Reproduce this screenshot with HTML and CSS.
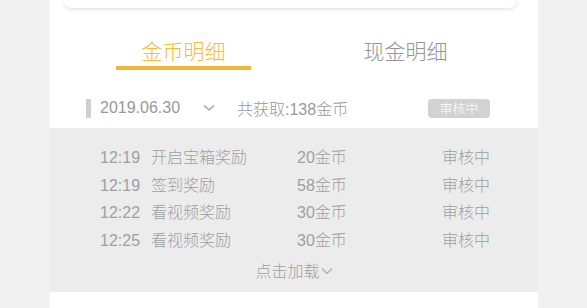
FILE: index.html
```html
<!DOCTYPE html>
<html>

<head>
    <meta charset="UTF-8">
    <title>金币明细</title>
    <link rel="stylesheet" href="styles.css">
</head>

<body>

    <div class="page">
        <div class="card"></div>

        <div class="tabs">
            <div class="tab active">金币明细</div>
            <div class="tab">现金明细</div>
        </div>

        <div class="day">
            <span class="mark"></span>
            <span class="date">2019.06.30</span>
            <svg class="arrow" width="12" height="8" viewBox="0 0 12 8">
                <path d="M1 1.5 L6 6 L11 1.5" fill="none" stroke="#999" stroke-width="1.2"/>
            </svg>
            <span class="total">共获取:138金币</span>
            <span class="badge">审核中</span>
        </div>

        <div class="list">
            <div class="row">
                <span class="time">12:19</span>
                <span class="name">开启宝箱奖励</span>
                <span class="coin">20金币</span>
                <span class="state">审核中</span>
            </div>
            <div class="row">
                <span class="time">12:19</span>
                <span class="name">签到奖励</span>
                <span class="coin">58金币</span>
                <span class="state">审核中</span>
            </div>
            <div class="row">
                <span class="time">12:22</span>
                <span class="name">看视频奖励</span>
                <span class="coin">30金币</span>
                <span class="state">审核中</span>
            </div>
            <div class="row">
                <span class="time">12:25</span>
                <span class="name">看视频奖励</span>
                <span class="coin">30金币</span>
                <span class="state">审核中</span>
            </div>
            <div class="more">点击加载<svg width="12" height="8" viewBox="0 0 12 8"><path d="M1 1.5 L6 6.5 L11 1.5" fill="none" stroke="#aaa" stroke-width="1.2"/></svg></div>
        </div>
    </div>

</body>

</html>
```

FILE: styles.css
```css
body {
    margin: 0;
    background-color: #f1f1f1;
    font-family: "Liberation Sans", "Noto Sans CJK SC", sans-serif;
    font-weight: 300;
    color: #999;
}

.page {
    width: 488px;
    height: 308px;
    margin-left: 50px;
    background-color: #fff;
    overflow: hidden;
}

.card {
    height: 8px;
    margin: 0 21px 0 14px;
    background-color: #fff;
    border-radius: 0 0 9px 9px;
    box-shadow: 0 1px 4px rgba(0, 0, 0, 0.14);
}

.tabs {
    display: grid;
    grid-template-columns: 135px 135px;
    column-gap: 87px;
    margin-left: 66px;
    margin-top: 27px;
}

.tab {
    height: 31px;
    text-align: center;
    font-family: "Noto Sans CJK SC", sans-serif;
    font-weight: 300;
    font-size: 21px;
    line-height: 30px;
    color: #959595;
    border-bottom: 4px solid transparent;
}

.tab.active {
    color: #f5bd3a;
    border-bottom-color: #f3b63a;
}

.day {
    display: flex;
    align-items: center;
    height: 20px;
    margin-top: 28px;
    margin-left: 36px;
    font-size: 16px;
}

.mark {
    width: 5px;
    height: 19px;
    background-color: #d0d0d0;
    margin-right: 9px;
}

.date {
    color: #999;
    width: 103px;
}

.arrow {
    margin-right: 22px;
}

.total {
    color: #999;
    width: 191px;
}

.badge {
    width: 62px;
    height: 19px;
    line-height: 19px;
    text-align: center;
    font-size: 13px;
    color: #fff;
    background-color: #d2d2d2;
    border-radius: 4px;
}

.list {
    margin-top: 10px;
    background-color: #ececec;
    padding-top: 16px;
    height: 148px;
}

.row {
    display: flex;
    height: 27.5px;
    line-height: 27.5px;
    font-size: 16px;
    color: #a0a0a0;
    padding-left: 50px;
}

.time {
    width: 51px;
}

.name {
    width: 146px;
}

.coin {
    width: 145px;
}

.more {
    text-align: center;
    font-size: 16px;
    line-height: 28px;
    color: #a0a0a0;
    margin-top: 4px;
}

.more svg {
    margin-left: 1px;
    vertical-align: 2px;
}
```
